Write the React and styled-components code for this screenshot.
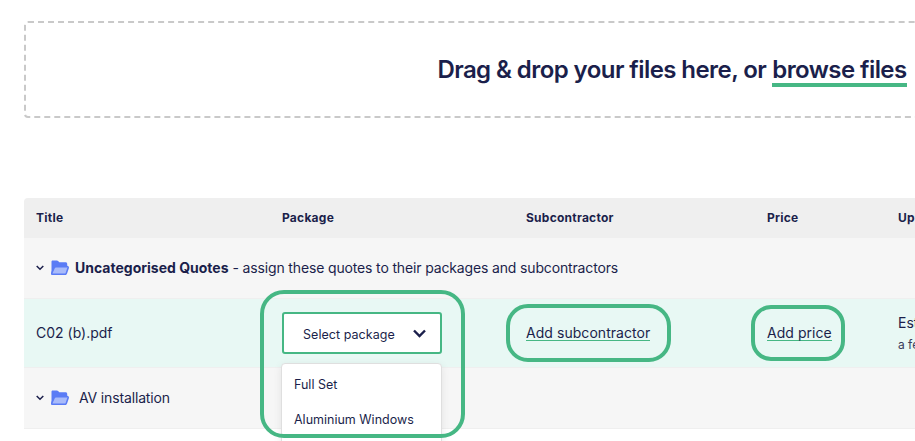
import React from "react";
import styled, { createGlobalStyle } from "styled-components";

const GlobalStyle = createGlobalStyle`
  html, body {
    margin: 0;
    height: 441px;
    overflow: hidden;
    background: #fff;
  }
  body {
    font-family: Inter, "Liberation Sans", sans-serif;
    color: #1b1f4b;
  }
`;

const Page = styled.div`
  width: 1296px;
  padding: 21px 0 0 24px;
`;

const DropZone = styled.div`
  height: 97px;
  box-sizing: border-box;
  border: 2px dashed #c9c9c9;
  border-radius: 4px;
  display: flex;
  align-items: center;
  justify-content: center;
  font-size: 24px;
  font-weight: 600;
  letter-spacing: -0.57px;
`;

const BrowseLink = styled.span`
  margin-left: 6px;
  border-bottom: 4px solid #46b784;
  line-height: 27px;
  margin-top: 4px;
`;

const Table = styled.div`
  margin-top: 80px;
`;

const Row = styled.div`
  display: grid;
  grid-template-columns: 246px 244px 241px 131px 1fr;
  align-items: center;
  box-sizing: border-box;
  height: ${(p) => p.$height}px;
  padding-left: 12px;
  background: ${(p) => p.$bg || "#f6f6f6"};
  border-bottom: 1px solid #efefef;
`;

const HeaderRow = styled(Row)`
  background: #efefef;
  border-bottom: 0;
  border-radius: 4px 4px 0 0;
  padding-bottom: 2px;
`;

const ActiveRow = styled(Row)`
  padding-bottom: 2px;
`;

const HeaderCell = styled.div`
  font-size: 12px;
  font-weight: 700;
  letter-spacing: 0.25px;
`;

const GroupRow = styled.div`
  display: flex;
  align-items: center;
  box-sizing: border-box;
  height: ${(p) => p.$height}px;
  padding: 0 0 1px 12px;
  background: #f6f6f6;
  border-bottom: 1px solid #efefef;
  font-size: 14px;
  letter-spacing: -0.15px;
`;

const Caret = styled.svg`
  width: 8px;
  height: 6px;
  margin-right: 7px;
  fill: none;
  stroke: #1b1f4b;
  stroke-width: 1.5;
`;

const FolderIcon = styled.svg`
  width: 18px;
  height: 15px;
  margin-right: ${(p) => p.$gap}px;
`;

const GroupName = styled.b`
  font-weight: 700;
  letter-spacing: 0;
  margin-right: 4px;
`;

const Cell = styled.div`
  position: relative;
  font-size: 14px;
`;

const Ring = styled.span`
  position: absolute;
  top: ${(p) => p.$top}px;
  left: ${(p) => p.$left}px;
  width: ${(p) => p.$width}px;
  height: ${(p) => p.$ringHeight}px;
  box-sizing: border-box;
  border: 4px solid #46b784;
  border-radius: ${(p) => p.$radius}px;
  pointer-events: none;
  z-index: 3;
`;

const Select = styled.div`
  width: 160px;
  height: 42px;
  margin-top: 2px;
  box-sizing: border-box;
  display: flex;
  align-items: center;
  justify-content: space-between;
  padding: 2px 14px 0 19px;
  background: #fff;
  border: 2px solid #46b784;
  border-radius: 3px;
  font-size: 12.5px;
  letter-spacing: 0.05px;
`;

const SelectCaret = styled.svg`
  width: 13px;
  height: 9px;
  margin-bottom: 2px;
  fill: none;
  stroke: #1b1f4b;
  stroke-width: 2.4;
`;

const Menu = styled.div`
  position: absolute;
  top: 53px;
  left: -1px;
  width: 161px;
  height: 120px;
  box-sizing: border-box;
  padding: 3px 12px;
  background: #fff;
  border: 1px solid #dfdfdf;
  border-radius: 4px;
  box-shadow: 0 2px 8px rgba(0, 0, 0, 0.08);
  z-index: 2;
`;

const MenuItem = styled.div`
  height: 35px;
  line-height: 35px;
  font-size: 12.5px;
  white-space: nowrap;
`;

const AddLink = styled.span`
  font-weight: 400;
  letter-spacing: 0.05px;
  border-bottom: 1px solid #46b784;
  line-height: 15px;
  display: inline-block;
`;

const UploadedCell = styled(Cell)`
  padding-top: 2px;
`;

const Uploaded = styled.div`
  white-space: nowrap;
  font-size: 14px;
`;

const UploadedAgo = styled.div`
  margin-top: 6px;
  font-size: 12px;
  color: #3a3d5c;
`;

const Chevron = () => (
  <Caret viewBox="0 0 8 6">
    <path d="M.7 1 4 4.3 7.3 1" />
  </Caret>
);

const Folder = ({ gap }) => (
  <FolderIcon viewBox="0.5 0 18 15" $gap={gap}>
    <path
      d="M2 0.5h4.4c.5 0 .9.2 1.2.5l1.2 1.2h6.2c1 0 1.7.7 1.7 1.7V6H6.2c-.8 0-1.4.4-1.7 1.1L2.6 12.5H1V2C1 1 1.3.5 2 .5Z"
      fill="#5b7cf5"
    />
    <path
      d="M5.4 6.6h11.2c.8 0 1.2.6 1 1.3l-1.7 5.2c-.2.8-.9 1.3-1.7 1.3H2.2c-.8 0-1.2-.6-1-1.3L3.7 7.8c.3-.8.9-1.2 1.7-1.2Z"
      fill="#a9bbfa"
      stroke="#5b7cf5"
      strokeWidth="1.6"
    />
  </FolderIcon>
);

export default function App() {
  return (
    <Page>
      <GlobalStyle />
      <DropZone>
        Drag &amp; drop your files here, or <BrowseLink>browse files</BrowseLink>
      </DropZone>
      <Table>
        <HeaderRow $height={40}>
          <HeaderCell>Title</HeaderCell>
          <HeaderCell>Package</HeaderCell>
          <HeaderCell>Subcontractor</HeaderCell>
          <HeaderCell>Price</HeaderCell>
          <HeaderCell>Uploaded</HeaderCell>
        </HeaderRow>
        <GroupRow $height={61}>
          <Chevron />
          <Folder gap={6} />
          <GroupName>Uncategorised Quotes</GroupName>- assign these quotes to their packages and subcontractors
        </GroupRow>
        <ActiveRow $height={69} $bg="#e8f8f4">
          <Cell>C02 (b).pdf</Cell>
          <Cell>
            <Ring $top={-20} $left={-22} $width={205} $ringHeight={148} $radius={24} />
            <Select>
              Select package
              <SelectCaret viewBox="0 0 13 9">
                <path d="M1 1.5 6.5 7 12 1.5" />
              </SelectCaret>
            </Select>
            <Menu>
              <MenuItem>Full Set</MenuItem>
              <MenuItem>Aluminium Windows</MenuItem>
            </Menu>
          </Cell>
          <Cell>
            <Ring $top={-20} $left={-20} $width={165} $ringHeight={58} $radius={22} />
            <AddLink>Add subcontractor</AddLink>
          </Cell>
          <Cell>
            <Ring $top={-19} $left={-16} $width={94} $ringHeight={56} $radius={20} />
            <AddLink>Add price</AddLink>
          </Cell>
          <UploadedCell>
            <Uploaded>Estimate</Uploaded>
            <UploadedAgo>a few seconds ago</UploadedAgo>
          </UploadedCell>
        </ActiveRow>
        <GroupRow $height={61}>
          <Chevron />
          <Folder gap={10} />
          AV installation
        </GroupRow>
      </Table>
    </Page>
  );
}
